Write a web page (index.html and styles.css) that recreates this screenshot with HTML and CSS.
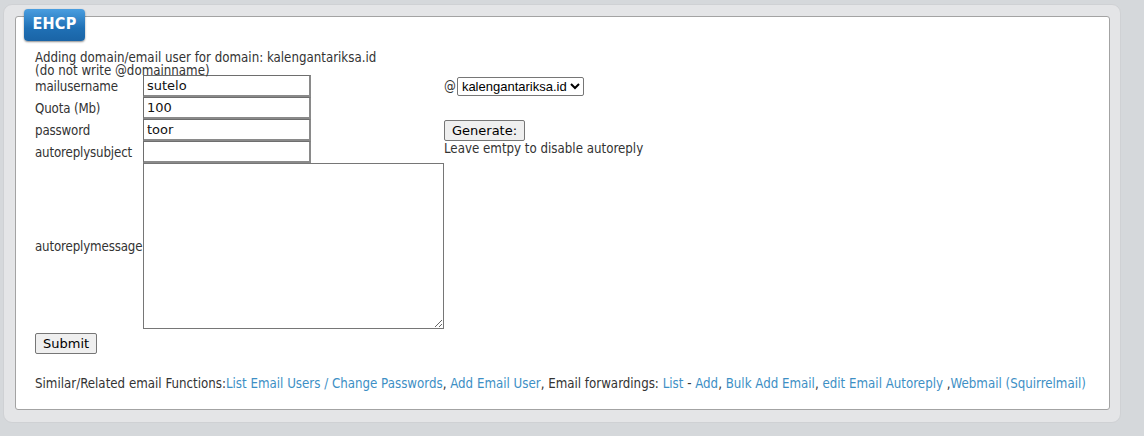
FILE: index.html
```html
<!DOCTYPE html>
<html>
<head>
<meta charset="utf-8">
<link rel="stylesheet" href="styles.css">
</head>
<body>
<div class="frame">
  <div class="panel">
    <div class="badge">EHCP</div>
    <div class="intro">Adding domain/email user for domain: kalengantariksa.id<br>(do not write @domainname)</div>
    <form>
      <table class="form-table">
        <tr>
          <td class="lbl">mailusername</td>
          <td><input class="txt" type="text" value="sutelo"></td>
          <td class="extra">@<select class="sel"><option>kalengantariksa.id</option></select></td>
        </tr>
        <tr>
          <td class="lbl">Quota (Mb)</td>
          <td><input class="txt" type="text" value="100"></td>
          <td></td>
        </tr>
        <tr>
          <td class="lbl">password</td>
          <td><input class="txt" type="text" value="toor"></td>
          <td class="extra"><button type="button" class="btn">Generate:</button></td>
        </tr>
        <tr>
          <td class="lbl">autoreplysubject</td>
          <td><input class="txt" type="text" value=""></td>
          <td class="extra note">Leave emtpy to disable autoreply</td>
        </tr>
        <tr>
          <td class="lbl">autoreplymessage</td>
          <td><textarea class="area"></textarea></td>
          <td></td>
        </tr>
      </table>
      <button type="button" class="btn submit">Submit</button>
    </form>
    <p class="related">Similar/Related email Functions:<a href="#">List Email Users / Change Passwords</a>, <a href="#">Add Email User</a>, Email forwardings: <a href="#">List</a> - <a href="#">Add</a>, <a href="#">Bulk Add Email</a>, <a href="#">edit Email Autoreply</a> ,<a href="#">Webmail (Squirrelmail)</a></p>
  </div>
</div>
</body>
</html>
```
FILE: styles.css
```css
html, body {
  margin: 0;
  padding: 0;
  background: #d5d8db;
}
body {
  font-family: "DejaVu Sans Condensed", "DejaVu Sans", sans-serif;
  font-size: 13.2px;
  color: #333;
}
.frame {
  margin: 4px 23px 13px 3px;
  padding: 11px 10px 12px 11px;
  background: #e4e5e7;
  border: 1px solid #cfd1d4;
  border-radius: 9px;
}
.panel {
  position: relative;
  background: #fff;
  border: 1px solid #a3a3a3;
  border-radius: 3px;
  padding: 34px 19px 14px 19px;
  height: 344px;
}
.badge {
  position: absolute;
  top: -8px;
  left: 8px;
  width: 61px;
  height: 32px;
  box-sizing: border-box;
  border-radius: 4px;
  background: linear-gradient(#4a9ee0, #1f70b5 60%, #1a64a6);
  color: #fff;
  font-weight: bold;
  font-size: 16px;
  line-height: 30px;
  text-align: center;
  box-shadow: 0 1px 2px rgba(0,0,0,0.45);
  letter-spacing: 0.3px;
}
.intro {
  line-height: 13px;
  height: 24px;
}
form { margin: 0; }
.form-table {
  border-collapse: collapse;
  border-spacing: 0;
}
.form-table td {
  padding: 0;
  height: 22px;
  vertical-align: middle;
}
.lbl {
  width: 108px;
  white-space: nowrap;
  letter-spacing: -0.15px;
}
.txt {
  box-sizing: border-box;
  width: 168px;
  height: 22px;
  margin: 0;
  border: 1px solid #767676;
  border-width: 1px 2px 2px 1px;
  border-color: #6e6e6e #8a8a8a #8a8a8a #6e6e6e;
  padding: 1px 3px;
  font-family: "DejaVu Sans", sans-serif;
  font-size: 13px;
  color: #111;
  display: block;
}
.area {
  box-sizing: border-box;
  display: block;
  width: 301px;
  height: 166px;
  margin: 0;
  border: 1px solid #767676;
  resize: both;
  font-family: "DejaVu Sans", sans-serif;
}
.extra {
  white-space: nowrap;
  padding-left: 0;
}
.sel {
  margin: 0 0 0 1px;
  height: 19px;
  font-family: "Liberation Sans", Arial, sans-serif;
  font-size: 13px;
  border: 1px solid #767676;
  border-radius: 2px;
  background: #fff;
  color: #000;
  vertical-align: middle;
}
.note {
  vertical-align: top !important;
  padding-top: 0 !important;
}
.btn {
  font-family: "DejaVu Sans", sans-serif;
  font-size: 13px;
  color: #000;
  background: #efefef;
  border: 1px solid #767676;
  border-radius: 2px;
  padding: 1px 7px;
  height: 21px;
  margin: 0;
}
.submit {
  margin-top: 4px;
  display: block;
}
.related {
  margin: 22px 0 0 0;
  line-height: 15px;
}
.related a {
  color: #3d8fc5;
  text-decoration: none;
}
```
